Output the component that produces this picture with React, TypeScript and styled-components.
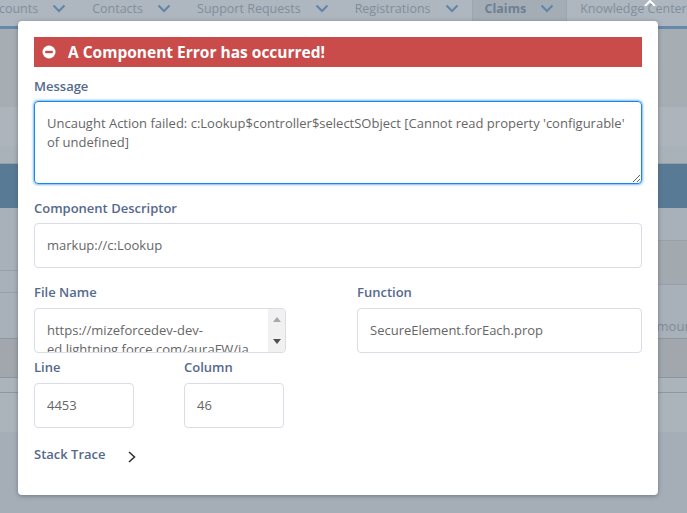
import React from "react";
import styled, { createGlobalStyle } from "styled-components";

const GlobalStyle = createGlobalStyle`
    html, body {
        margin: 0;
        padding: 0;
        background: #a5aeb7;
    }
    * {
        box-sizing: border-box;
    }
`;

const NAV_ITEMS = ["Accounts", "Contacts", "Support Requests", "Registrations", "Claims", "Knowledge Center"];

const Chevron = () => (
    <svg width="14" height="9" viewBox="0 0 14 9" fill="none">
        <path d="M1.5 1.5 L7 7 L12.5 1.5" stroke="#5f86a8" strokeWidth="2" />
    </svg>
);

const App = () => (
    <Page>
        <GlobalStyle />
        <Nav>
            {NAV_ITEMS.map((item) => (
                <NavItem key={item} $active={item === "Claims"}>
                    {item}
                    {item !== "Knowledge Center" && <Chevron />}
                </NavItem>
            ))}
        </Nav>
        <Band $height={81} $bg="#a6aeb4" $accent />
        <Band $height={39} $bg="#adb4bb" />
        <Band $height={18} $bg="#a9b1b9" $line />
        <Band $height={44} $bg="#597a94" />
        <TableRows>
            <TableColumn>
                <Band $height={63} $bg="#a8b1b9" $line />
                <Band $height={22} $bg="#a8b1b9" $line />
                <Band $height={46} $bg="#a8b1b9" $line $dark />
            </TableColumn>
            <TableColumn>
                <Band $height={33} $bg="#a8b1b9" $line />
                <Band $height={44} $bg="#a2a9af" $line />
                <Band $height={54} $bg="#a8b1b9" $line $dark>
                    <ClippedAmount>Amount</ClippedAmount>
                </Band>
            </TableColumn>
        </TableRows>
        <Band $height={39} $bg="#a1a7ad" $line $dark />
        <Band $height={15} $bg="#abb3bb" $line $dark />
        <Band $height={39} $bg="#abb3bb" />

        <Backdrop>
            <CloseIcon width="12" height="6" viewBox="0 0 12 6" fill="none">
                <path d="M1 6 L6 1 L11 6" stroke="#ffffff" strokeWidth="2" />
            </CloseIcon>
            <Modal>
                <ErrorBanner>
                    <svg width="14" height="14" viewBox="0 0 14 14">
                        <circle cx="7" cy="7" r="6.5" fill="#ffffff" />
                        <rect x="3.2" y="5.8" width="7.6" height="2.4" fill="#c94c4a" />
                    </svg>
                    A Component Error has occurred!
                </ErrorBanner>

                <Field $top={10}>
                    <Label $tight>Message</Label>
                    <MessageArea>
                        Uncaught Action failed: c:Lookup$controller$selectSObject [Cannot read property 'configurable' of undefined]
                    </MessageArea>
                </Field>

                <Field $top={15}>
                    <Label $tight>Component Descriptor</Label>
                    <Input>markup://c:Lookup</Input>
                </Field>

                <Row $top={15} $gap={71}>
                    <Field $width={252}>
                        <Label>File Name</Label>
                        <Input>
                            <ScrollText>https://mizeforcedev-dev-ed.lightning.force.com/auraFW/javascript/aura_prod.js</ScrollText>
                            <FakeScrollbar>
                                <svg width="8" height="5" viewBox="0 0 8 5"><path d="M0 5 L4 0 L8 5 Z" fill="#a8a8a8" /></svg>
                                <svg width="8" height="5" viewBox="0 0 8 5"><path d="M0 0 L4 5 L8 0 Z" fill="#505050" /></svg>
                            </FakeScrollbar>
                        </Input>
                    </Field>
                    <Field $width={285}>
                        <Label>Function</Label>
                        <Input>SecureElement.forEach.prop</Input>
                    </Field>
                </Row>

                <Row $top={5} $gap={50}>
                    <Field $width={100}>
                        <Label>Line</Label>
                        <Input>4453</Input>
                    </Field>
                    <Field $width={100}>
                        <Label>Column</Label>
                        <Input>46</Input>
                    </Field>
                </Row>

                <StackTrace>
                    <Label as="span">Stack Trace</Label>
                    <svg width="8" height="12" viewBox="0 0 8 12" fill="none">
                        <path d="M1 1 L6.5 6 L1 11" stroke="#2b2b2b" strokeWidth="1.5" />
                    </svg>
                </StackTrace>
            </Modal>
        </Backdrop>
    </Page>
);

export default App;

const Page = styled.div`
    position: relative;
    width: 687px;
    height: 513px;
    overflow: hidden;
    background: #a5aeb7;
    font-family: "Open Sans", "Noto Sans", sans-serif;
`;

const Nav = styled.div`
    display: flex;
    height: 26px;
    margin-left: -28px;
    background: #aeb6bf;
    white-space: nowrap;
`;

const NavItem = styled.div<{ $active?: boolean }>`
    display: flex;
    flex: none;
    align-items: center;
    gap: 14px;
    padding: 0 13px 10px 13px;
    font-size: 12.5px;
    font-weight: ${({ $active }) => ($active ? 700 : 400)};
    color: ${({ $active }) => ($active ? "#6d7f92" : "#808e9c")};
    background: ${({ $active }) => ($active ? "#a4adb6" : "transparent")};
    box-shadow: ${({ $active }) => ($active ? "inset 1px 0 #9ca6b0, inset -1px 0 #9ca6b0" : "none")};
`;

const Band = styled.div<{ $height: number; $bg: string; $line?: boolean; $dark?: boolean; $accent?: boolean }>`
    height: ${({ $height }) => $height}px;
    background: ${({ $bg }) => $bg};
    border-top: ${({ $accent }) => ($accent ? "3px solid #6589ab" : "none")};
    border-bottom: ${({ $line, $dark }) => ($line ? `1px solid ${$dark ? "#8f969d" : "#999fa6"}` : "none")};
    overflow: hidden;
`;

const TableRows = styled.div`
    display: grid;
    grid-template-columns: 1fr 1fr;
`;

const TableColumn = styled.div`
    display: flex;
    flex-direction: column;
`;

const ClippedAmount = styled.div`
    margin: 32px -10px 0 0;
    text-align: right;
    font-size: 13px;
    line-height: 18px;
    color: #7f8b97;
`;

const Backdrop = styled.div`
    position: absolute;
    inset: 0;
`;

const CloseIcon = styled.svg`
    position: absolute;
    top: 0;
    left: 644px;
`;

const Modal = styled.div`
    position: absolute;
    top: 21px;
    left: 18px;
    width: 640px;
    height: 474px;
    padding: 16px;
    background: #ffffff;
    border-radius: 4px;
    box-shadow: 0 1px 4px rgba(60, 70, 80, 0.5);
`;

const ErrorBanner = styled.div`
    display: flex;
    align-items: center;
    gap: 12px;
    height: 30px;
    padding-left: 8px;
    background: #c94c4a;
    color: #ffffff;
    font-size: 15.5px;
    font-weight: 700;
`;

const Field = styled.div<{ $top?: number; $width?: number }>`
    margin-top: ${({ $top }) => $top ?? 0}px;
    width: ${({ $width }) => ($width ? `${$width}px` : "auto")};
`;

const Row = styled.div<{ $top: number; $gap: number }>`
    display: flex;
    gap: ${({ $gap }) => $gap}px;
    margin-top: ${({ $top }) => $top}px;
`;

const Label = styled.div<{ $tight?: boolean }>`
    height: 18px;
    margin-bottom: ${({ $tight }) => ($tight ? 6 : 7)}px;
    font-size: 13px;
    line-height: 18px;
    font-weight: 600;
    color: #54698d;
`;

const Input = styled.div`
    position: relative;
    height: 45px;
    padding: 12px;
    border: 1px solid #d8dde6;
    border-radius: 4px;
    font-size: 13px;
    line-height: 19px;
    color: #666666;
    background: #ffffff;
    overflow: hidden;
`;

const MessageArea = styled.div`
    height: 83px;
    padding: 12px;
    border: 1px solid #1589ee;
    border-radius: 4px;
    box-shadow: 0 0 3px #0070d2;
    font-size: 13px;
    line-height: 19px;
    color: #666666;
    overflow: auto;
    resize: vertical;
`;

const ScrollText = styled.div`
    width: 208px;
    overflow-wrap: anywhere;
`;

const FakeScrollbar = styled.div`
    position: absolute;
    top: 0;
    right: 0;
    bottom: 0;
    display: flex;
    flex-direction: column;
    justify-content: space-between;
    align-items: center;
    width: 17px;
    padding: 8px 0;
    background: #f1f1f1;
`;

const StackTrace = styled.div`
    display: flex;
    align-items: flex-start;
    gap: 22px;
    margin-top: 17px;

    svg {
        margin-top: 6px;
    }
`;
